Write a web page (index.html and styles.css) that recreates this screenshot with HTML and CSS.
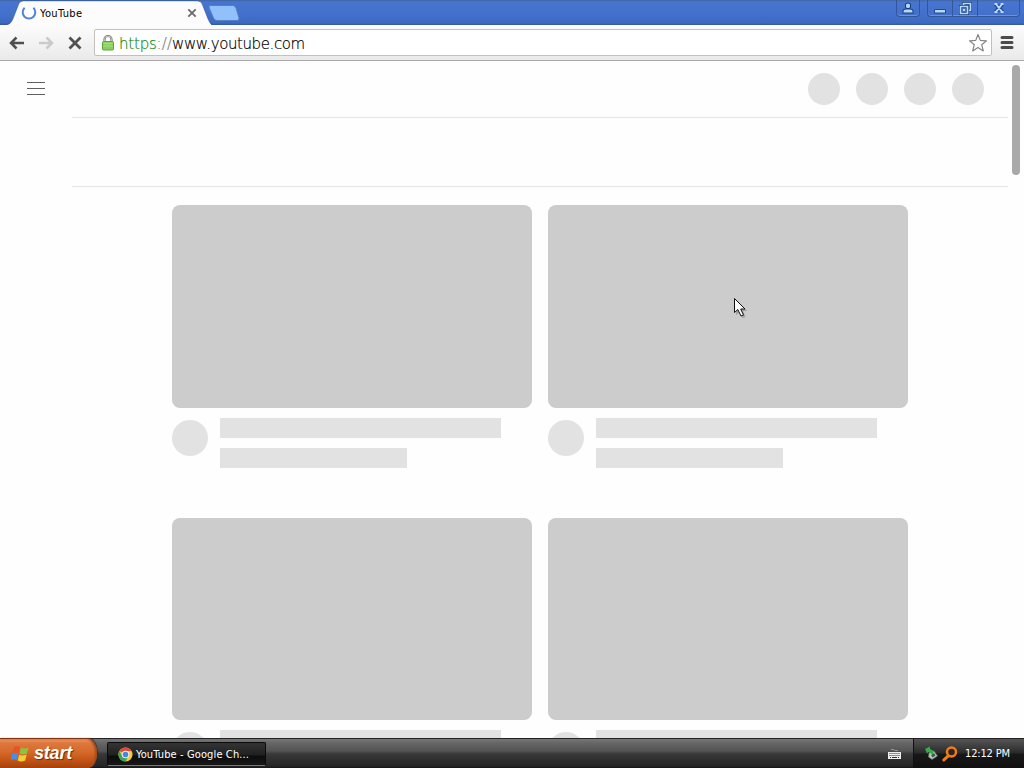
FILE: index.html
```html
<!DOCTYPE html>
<html lang="en">
<head>
<meta charset="UTF-8">
<meta name="viewport" content="width=device-width, initial-scale=1.0">
<title>YouTube</title>
<link rel="stylesheet" href="styles.css">
</head>
<body>
<div class="desktop">
    <header class="tabstrip">
        <div class="tab">
            <svg class="tab-shape" width="208" height="25" viewBox="0 0 212 25" preserveAspectRatio="none">
                <path d="M0 25C6 25 7 23 9 19L15 4Q16 1 20 1H197Q201 1 202 4L208 19C210 23 211 25 212 25Z" fill="#fcfcfc"/>
                <path d="M0 24.500C6 24.500 7 23 9 19L15 4Q16 1 20 .8H197Q201 1 202 4L208 19C210 23 211 24.500 212 24.500" fill="none" stroke="#31549c" stroke-width=".6"/>
            </svg>
            <svg class="spinner" width="16" height="16" viewBox="0 0 16 16">
                <path d="M3.6 2.8A6.3 6.3 0 1 0 12.4 2.8" fill="none" stroke="#4f83dc" stroke-width="2"/>
            </svg>
            <span class="tab-title">YouTube</span>
            <svg class="tab-close" width="10" height="10" viewBox="0 0 10 10">
                <path d="M1.3 1.3L8.7 8.7M8.7 1.3L1.3 8.7" stroke="#6a6a6a" stroke-width="1.8"/>
            </svg>
        </div>
        <svg class="new-tab" width="32" height="16" viewBox="0 0 32 16">
            <path d="M2.500 .5H25Q27 .5 28 3L31 13Q31.500 15.500 29 15.500H9Q6.500 15.500 5.500 13L1.200 3Q.5.500 2.500 .5Z" fill="#91c0fa" stroke="#527fc9"/>
        </svg>
        <div class="window-buttons">
            <div class="win-group">
                <div class="win-btn user-btn">
                    <svg width="12" height="12" viewBox="0 0 12 12"><path d="M4 3Q4 1.500 6 1.500T8 3V4.500Q8 6 6 6T4 4.500ZM1.500 10.500V9Q1.500 7.500 4 7.500H8Q10.500 7.500 10.500 9V10.500Z" fill="#b9d9fc" stroke="#153c80" stroke-width="2" paint-order="stroke"/></svg>
                </div>
            </div>
            <div class="win-group">
                <div class="win-btn min-btn">
                    <svg width="12" height="12" viewBox="0 0 12 12"><path d="M.5 7.500H11.500V11H.5Z" fill="#b9d9fc" stroke="#204a94"/></svg>
                </div>
                <div class="win-btn restore-btn">
                    <svg width="13" height="13" viewBox="0 0 13 13"><path d="M4.500 3V1.500H11.500V8.500H10M1.500 4.500H8.500V11.500H1.500Z" fill="none" stroke="#173c7d" stroke-width="3"/><path d="M4.500 3V1.500H11.500V8.500H10M1.500 4.500H8.500V11.500H1.500Z" fill="none" stroke="#b9d9fc" stroke-width="1.700"/><path d="M4 7H6V9H4Z" fill="#b9d9fc"/></svg>
                </div>
                <div class="win-btn close-btn">
                    <svg width="12" height="12" viewBox="0 0 12 12"><path d="M2.500 2L9.500 10M9.500 2L2.500 10" stroke="#204a94" stroke-width="4"/><path d="M3 2L9 10M9 2L3 10M1.500 2H4.500M7.500 2H10.500M1.500 10H4.500M7.500 10H10.500" stroke="#b9d9fc" stroke-width="2"/></svg>
                </div>
            </div>
        </div>
    </header>

    <div class="toolbar">
        <svg class="nav-icon" width="16" height="14" viewBox="0 0 16 14"><path d="M15 7H2M7.500 1.500L2 7L7.500 12.500" fill="none" stroke="#505050" stroke-width="2.500"/></svg>
        <svg class="nav-icon" width="16" height="14" viewBox="0 0 16 14"><path d="M1 7H14M8.500 1.500L14 7L8.500 12.500" fill="none" stroke="#cacaca" stroke-width="2.500"/></svg>
        <svg class="nav-icon" width="14" height="14" viewBox="0 0 14 14"><path d="M1.500 1.500L12.500 12.500M12.500 1.500L1.500 12.500" stroke="#505050" stroke-width="2.800"/></svg>
        <div class="omnibox">
            <svg class="lock" width="12" height="16" viewBox="0 0 12 16">
                <path d="M2.500 7V4.500a3.500 3.500 0 0 1 7 0V7" fill="none" stroke="#777" stroke-width="2.200"/>
                <path d="M2.500 7V4.500a3.500 3.500 0 0 1 7 0V7" fill="none" stroke="#ddd" stroke-width=".8"/>
                <rect x=".5" y="6.500" width="11" height="8.500" rx="1" fill="#8bd05e" stroke="#58a737"/>
                <path d="M1.500 8.500H10.500M1.500 11H10.500" stroke="#a8df82"/>
            </svg>
            <span class="url"><span class="scheme">https</span><span class="slashes">://</span>www.youtube.com</span>
            <svg class="star" width="20" height="20" viewBox="0 0 20 20"><path d="M10 1.500L12.300 7.400L18.500 7.800L13.700 11.700L15.300 17.900L10 14.500L4.700 17.900L6.300 11.700L1.500 7.800L7.700 7.400Z" fill="#fff" stroke="#858585" stroke-width="1.200" stroke-linejoin="round"/></svg>
        </div>
        <svg class="menu" width="14" height="13" viewBox="0 0 14 13"><path d="M2 1.500H12M2 6.500H12M2 11.500H12" stroke="#4c4c4c" stroke-width="3" stroke-linecap="round"/></svg>
    </div>

    <main class="page">
        <div class="guide">
            <svg width="18" height="13" viewBox="0 0 18 13"><path d="M0 .5H18M0 6.500H18M0 12.500H18" stroke="#606060"/></svg>
        </div>
        <div class="content">
            <div class="masthead">
                <div class="circle"></div>
                <div class="circle"></div>
                <div class="circle"></div>
                <div class="circle"></div>
            </div>
            <div class="chips"></div>
            <div class="video-grid">
                <div class="video">
                    <div class="thumb"></div>
                    <div class="details">
                        <div class="avatar"></div>
                        <div class="lines"><div class="line"></div><div class="line short"></div></div>
                    </div>
                </div>
                <div class="video">
                    <div class="thumb"></div>
                    <div class="details">
                        <div class="avatar"></div>
                        <div class="lines"><div class="line"></div><div class="line short"></div></div>
                    </div>
                </div>
                <div class="video">
                    <div class="thumb"></div>
                    <div class="details">
                        <div class="avatar"></div>
                        <div class="lines"><div class="line"></div><div class="line short"></div></div>
                    </div>
                </div>
                <div class="video">
                    <div class="thumb"></div>
                    <div class="details">
                        <div class="avatar"></div>
                        <div class="lines"><div class="line"></div><div class="line short"></div></div>
                    </div>
                </div>
            </div>
        </div>
        <div class="scrollbar"><div class="scroll-thumb"></div></div>
    </main>

    <footer class="taskbar">
        <div class="start">
            <svg width="20" height="18" viewBox="0 0 20 18">
                <path d="M4 2Q7 0 10 2L8.500 8Q5.500 6.500 2.500 8Z" fill="#e8542a"/>
                <path d="M11 2.500Q14 4.500 18.500 2.500L17 8.500Q13 10.500 9.500 8.500Z" fill="#8cc43c"/>
                <path d="M2.200 9Q5 7.500 8.200 9L6.700 15Q3.500 13.500.7 15Z" fill="#4b8ee8"/>
                <path d="M9.200 9.500Q12.500 11.500 16.700 9.500L15.200 15.500Q11 17.500 7.700 15.500Z" fill="#f7cd36"/>
            </svg>
            <span>start</span>
        </div>
        <div class="task">
            <svg width="15" height="15" viewBox="0 0 16 16">
                <circle cx="8" cy="8" r="7.500" fill="#f6ca35"/>
                <path d="M8 8L1.500 4.250A7.500 7.500 0 0 1 14.500 4.250H8Z" fill="#df4937"/>
                <path d="M1.500 4.250A7.500 7.500 0 0 0 8 15.500L11.200 9.800L4.700 9.800Z" fill="#39a45a"/>
                <circle cx="8" cy="8" r="4" fill="#f5f5f5"/>
                <circle cx="8" cy="8" r="3" fill="#4686df"/>
            </svg>
            <span>YouTube - Google Ch...</span>
        </div>
        <svg class="keyboard" width="13" height="13" viewBox="0 0 13 13">
            <path d="M3 2.500H5L7 3.500H10" fill="none" stroke="#aaa" stroke-width=".8"/>
            <path d="M0 5H13V12H0Z" fill="#eee"/>
            <path d="M1.500 6.500H12M1.500 8.500H12" stroke="#333" stroke-dasharray="1 1"/><path d="M2 10.500H3M4 10.500H9M10 10.500H11" stroke="#333"/>
        </svg>
        <div class="tray">
            <svg width="14" height="15" viewBox="0 0 14 15">
                <path d="M5 7L10 5L13.500 10L8 13.500L4.500 11Z" fill="#b9c5bd" stroke="#5e6d64" stroke-width=".7"/>
                <path d="M7 9L10 7L11.500 9.500L8.500 11.500Z" fill="#3d5c4a"/>
                <path d="M1 3L6 .5L6 3L10 5L8.500 8.500L4.500 6L3 7.500Z" fill="#35ad45"/>
            </svg>
            <svg class="search" width="16" height="16" viewBox="0 0 16 16">
                <path d="M6.200 9.800L1.800 14" stroke="#f47b16" stroke-width="3" stroke-linecap="round"/>
                <circle cx="9.500" cy="6" r="4.500" fill="#30251d" stroke="#f47b16" stroke-width="2.500"/>
            </svg>
            <span>12:12 PM</span>
        </div>
    </footer>

    <svg class="cursor" width="16" height="24" viewBox="0 0 16 24">
        <path d="M3 3V18L6.500 15.500L9.500 21L12.500 20L10 14H14.500Z" fill="#777" opacity=".5"/>
        <path d="M1.500 1.500V15.500L4.800 12.500L8 19L10.500 18L7.700 12H12Z" fill="#fff" stroke="#111" stroke-width="1"/>
    </svg>
</div>
</body>
</html>
```
FILE: styles.css
```css
* {
    box-sizing: border-box;
}

body {
    margin: 0;
    font-family: "DejaVu Sans Condensed", "DejaVu Sans", sans-serif;
    font-size: 11px;
}

svg {
    display: block;
    flex-shrink: 0;
}

.desktop {
    position: relative;
    width: 1024px;
    height: 768px;
    overflow: hidden;
    display: flex;
    flex-direction: column;
    background: #fff;
}

.tabstrip {
    height: 25px;
    flex-shrink: 0;
    display: flex;
    padding-left: 2px;
    background: linear-gradient(#40659f 0, #4775cf 2px, #416fca 16px, #3d69c0 23px, #345699 25px);
}

.tab {
    position: relative;
    width: 206px;
    height: 25px;
    display: flex;
    align-items: center;
    padding-left: 19px;
}

.tab-shape {
    position: absolute;
    left: 2px;
    top: 0;
}

.spinner,
.tab-title,
.tab-close {
    position: relative;
}

.tab-title {
    margin-left: 3px;
    flex: 1;
    line-height: 25px;
    padding-top: 1px;
    letter-spacing: 0.35px;
    color: #000;
}

.tab-close {
    margin: 1px 11px 0 0;
}

.new-tab {
    margin: 5px 0 0;
}

.window-buttons {
    margin-left: auto;
    display: flex;
    gap: 7px;
    padding-right: 4px;
}

.win-group {
    display: flex;
    height: 17px;
    border: 1px solid #315797;
    border-top: 0;
    border-radius: 0 0 4px 4px;
    box-shadow: inset 0 -1px #6992df;
}

.win-btn {
    display: flex;
    justify-content: center;
    align-items: center;
    border-right: 1px solid #315797;
}

.win-btn:last-child {
    border-right: 0;
}

.user-btn {
    width: 22px;
}

.min-btn,
.restore-btn {
    width: 25px;
}

.close-btn {
    width: 41px;
}

.toolbar {
    height: 36px;
    flex-shrink: 0;
    display: flex;
    align-items: center;
    padding: 0 9px;
    background: linear-gradient(#fcfcfc, #eaeaea);
    border-bottom: 1px solid #a9a9a9;
}

.nav-icon {
    margin-right: 13px;
}

.nav-icon:nth-child(2) {
    margin-right: 14px;
}

.nav-icon:nth-child(3) {
    margin-right: 12px;
}

.omnibox {
    width: 898px;
    height: 27px;
    display: flex;
    align-items: center;
    padding: 0 3px 0 7px;
    background: #fff;
    border: 1px solid #c5c0bc;
    border-radius: 2px;
}

.url {
    flex: 1;
    margin-left: 5px;
    padding-top: 2px;
    font-family: "DejaVu Sans", sans-serif;
    font-size: 15px;
    font-weight: 200;
    letter-spacing: -0.4px;
    color: #000;
    -webkit-text-stroke: 0.2px;
}

.scheme {
    color: #168a16;
    letter-spacing: -0.2px;
}

.slashes {
    color: #808080;
    letter-spacing: 0.1px;
}

.menu {
    margin-left: 8px;
}

.page {
    flex: 1;
    min-height: 0;
    overflow: hidden;
    display: flex;
    background: #fefefe;
}

.guide {
    width: 72px;
    padding: 21px 0 0 27px;
}

.content {
    width: 936px;
}

.masthead {
    height: 57px;
    display: flex;
    justify-content: flex-end;
    align-items: center;
    gap: 16px;
    padding-right: 24px;
    border-bottom: 1px solid #e4e4e4;
}

.circle {
    width: 32px;
    height: 32px;
    border-radius: 50%;
    background: #e2e2e2;
}

.chips {
    height: 69px;
    border-bottom: 1px solid #e4e4e4;
}

.video-grid {
    display: grid;
    grid-template-columns: 360px 360px;
    column-gap: 16px;
    padding: 18px 0 0 100px;
}

.video {
    height: 312.5px;
}

.thumb {
    height: 202.5px;
    border-radius: 8px;
    background: #ccc;
}

.details {
    display: flex;
    gap: 12px;
    padding-top: 10.4px;
}

.avatar {
    width: 36px;
    height: 36px;
    margin-top: 2px;
    border-radius: 50%;
    background: #e2e2e2;
}

.lines {
    display: flex;
    flex-direction: column;
    gap: 10px;
}

.line {
    width: 281px;
    height: 20px;
    background: #e2e2e2;
}

.line.short {
    width: 187px;
}

.scrollbar {
    width: 16px;
    padding: 4px 4px 0;
}

.scroll-thumb {
    height: 110px;
    border-radius: 4px;
    background: #a9a9a9;
}

.taskbar {
    height: 30px;
    flex-shrink: 0;
    display: flex;
    align-items: center;
    background: linear-gradient(#222 0, #222 1px, #777 1px, #666 5px, #535353 13px, #383838 16px, #252525 28px, #151515);
    color: #fff;
}

.start {
    width: 97px;
    height: 30px;
    display: flex;
    align-items: center;
    padding-left: 10px;
    gap: 4px;
    border-top: 1px solid #7e3514;
    border-radius: 0 9px 9px 0 / 0 15px 15px 0;
    background: linear-gradient(#f19a61 0, #df783e 4px, #d36728 14px, #c75718 20px, #a5410d);
    box-shadow: inset -2px 0 2px #a44b1f, 1px 0 1px #333;
    font: italic bold 18px "Liberation Sans", sans-serif;
    letter-spacing: -0.2px;
    text-shadow: 1px 1px 1px #63300f;
}

.task {
    width: 159px;
    height: 24px;
    margin: 2px 0 0 10px;
    padding: 0 10px;
    display: flex;
    align-items: center;
    gap: 3px;
    border: 1px solid #0b0b0b;
    border-bottom-color: #777;
    border-radius: 2px;
    background: linear-gradient(#343434, #202020 12px, #0c0c0c 13px, #171717);
    letter-spacing: 0.12px;
    white-space: nowrap;
}

.keyboard {
    margin: 0 12px 0 auto;
}

.tray {
    width: 111px;
    height: 29px;
    margin-top: 1px;
    padding-left: 10px;
    display: flex;
    align-items: center;
    border-left: 1px solid #111;
    background: linear-gradient(#555, #3d3d3d 8px, #292929 14px, #181818 15px, #101010);
    letter-spacing: -0.15px;
    white-space: nowrap;
}

.search {
    margin: 0 7px 0 4px;
}

.cursor {
    position: absolute;
    left: 733px;
    top: 297px;
}
```
